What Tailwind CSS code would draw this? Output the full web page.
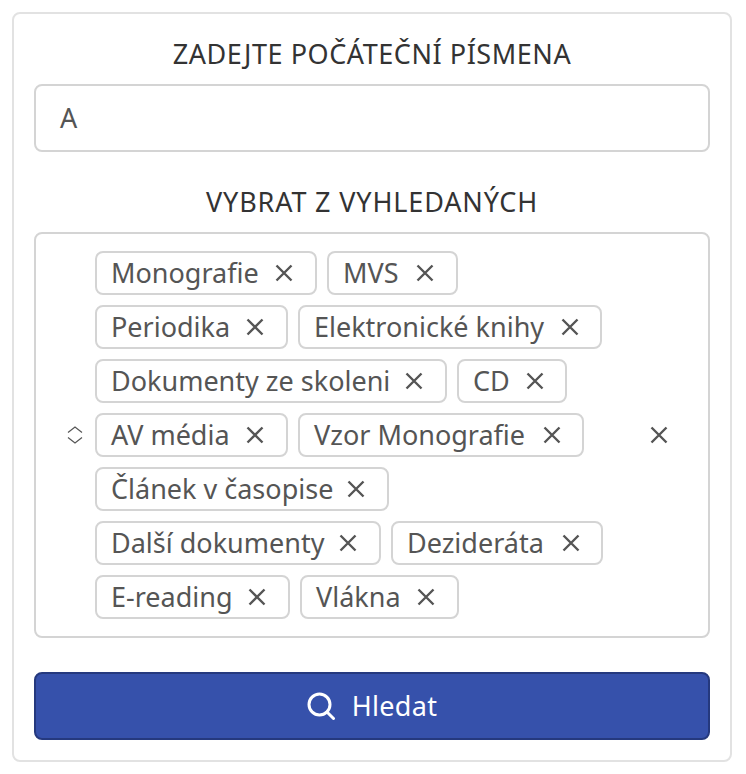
<!DOCTYPE html>
<html lang="cs">
<head>
    <meta charset="UTF-8">
    <title>Hledat</title>
    <script src="https://cdn.jsdelivr.net/npm/@tailwindcss/browser@4"></script>
</head>
<body class="bg-white font-['Noto_Sans',sans-serif]">
    <div class="pt-[12px] pl-[12px]">
        <div class="w-[720px] h-[750px] bg-white border-2 border-[#e2e2e2] rounded-[8px] px-[20px] pt-[18px]">
            <div class="h-[44px] mb-[8px] flex items-center justify-center text-[27px] text-[#333] tracking-[0.55px]">ZADEJTE POČÁTEČNÍ PÍSMENA</div>
            <div class="h-[68px] border-2 border-[#d4d4d4] rounded-[8px] flex items-center pl-[24px] text-[27px] text-[#555]">A</div>
            <div class="h-[80px] pt-[20px] flex items-center justify-center text-[27px] text-[#333] tracking-[0.85px]">VYBRAT Z VYHLEDANÝCH</div>
            <div class="h-[406px] border-2 border-[#d4d4d4] rounded-[8px] flex items-center pl-[31px]">
                <svg class="w-[16px] h-[18px] shrink-0" viewBox="0 0 16 18" fill="none" stroke="#555" stroke-width="1.200"><path d="M1 6.500 8 1l7 5.500M1 11.500 8 17l7-5.500"/></svg>
                <div class="w-[545px] ml-[12px] flex flex-wrap gap-[10px] text-[27px] text-[#555]">
                    <div class="w-[222px] h-[44px] border-2 border-[#d4d4d4] rounded-[8px] flex items-center justify-between pl-[14px] pr-[22px]">Monografie<svg class="w-[18px] h-[18px]" viewBox="0 0 18 18" stroke="#555" stroke-width="2.400"><path d="M1.500 1.500 16.500 16.500M16.500 1.500 1.500 16.500"/></svg></div>
                    <div class="w-[131px] h-[44px] border-2 border-[#d4d4d4] rounded-[8px] flex items-center justify-between pl-[14px] pr-[22px]">MVS<svg class="w-[18px] h-[18px]" viewBox="0 0 18 18" stroke="#555" stroke-width="2.400"><path d="M1.500 1.500 16.500 16.500M16.500 1.500 1.500 16.500"/></svg></div>
                    <div class="w-[193px] h-[44px] border-2 border-[#d4d4d4] rounded-[8px] flex items-center justify-between pl-[14px] pr-[22px]">Periodika<svg class="w-[18px] h-[18px]" viewBox="0 0 18 18" stroke="#555" stroke-width="2.400"><path d="M1.500 1.500 16.500 16.500M16.500 1.500 1.500 16.500"/></svg></div>
                    <div class="w-[304px] h-[44px] border-2 border-[#d4d4d4] rounded-[8px] flex items-center justify-between pl-[14px] pr-[21px]">Elektronické knihy<svg class="w-[18px] h-[18px]" viewBox="0 0 18 18" stroke="#555" stroke-width="2.400"><path d="M1.500 1.500 16.500 16.500M16.500 1.500 1.500 16.500"/></svg></div>
                    <div class="w-[352px] h-[44px] border-2 border-[#d4d4d4] rounded-[8px] flex items-center justify-between pl-[14px] pr-[22px]">Dokumenty ze skoleni<svg class="w-[18px] h-[18px]" viewBox="0 0 18 18" stroke="#555" stroke-width="2.400"><path d="M1.500 1.500 16.500 16.500M16.500 1.500 1.500 16.500"/></svg></div>
                    <div class="w-[110px] h-[44px] border-2 border-[#d4d4d4] rounded-[8px] flex items-center justify-between pl-[14px] pr-[21px]">CD<svg class="w-[18px] h-[18px]" viewBox="0 0 18 18" stroke="#555" stroke-width="2.400"><path d="M1.500 1.500 16.500 16.500M16.500 1.500 1.500 16.500"/></svg></div>
                    <div class="w-[193px] h-[44px] border-2 border-[#d4d4d4] rounded-[8px] flex items-center justify-between pl-[14px] pr-[22px]">AV média<svg class="w-[18px] h-[18px]" viewBox="0 0 18 18" stroke="#555" stroke-width="2.400"><path d="M1.500 1.500 16.500 16.500M16.500 1.500 1.500 16.500"/></svg></div>
                    <div class="w-[286px] h-[44px] border-2 border-[#d4d4d4] rounded-[8px] flex items-center justify-between pl-[14px] pr-[21px]">Vzor Monografie<svg class="w-[18px] h-[18px]" viewBox="0 0 18 18" stroke="#555" stroke-width="2.400"><path d="M1.500 1.500 16.500 16.500M16.500 1.500 1.500 16.500"/></svg></div>
                    <div class="w-[294px] h-[44px] border-2 border-[#d4d4d4] rounded-[8px] flex items-center justify-between pl-[14px] pr-[22px]">Článek v časopise<svg class="w-[18px] h-[18px]" viewBox="0 0 18 18" stroke="#555" stroke-width="2.400"><path d="M1.500 1.500 16.500 16.500M16.500 1.500 1.500 16.500"/></svg></div>
                    <div class="w-[286px] h-[44px] border-2 border-[#d4d4d4] rounded-[8px] flex items-center justify-between pl-[14px] pr-[22px]">Další dokumenty<svg class="w-[18px] h-[18px]" viewBox="0 0 18 18" stroke="#555" stroke-width="2.400"><path d="M1.500 1.500 16.500 16.500M16.500 1.500 1.500 16.500"/></svg></div>
                    <div class="w-[212px] h-[44px] border-2 border-[#d4d4d4] rounded-[8px] flex items-center justify-between pl-[14px] pr-[21px]">Dezideráta<svg class="w-[18px] h-[18px]" viewBox="0 0 18 18" stroke="#555" stroke-width="2.400"><path d="M1.500 1.500 16.500 16.500M16.500 1.500 1.500 16.500"/></svg></div>
                    <div class="w-[195px] h-[44px] border-2 border-[#d4d4d4] rounded-[8px] flex items-center justify-between pl-[14px] pr-[22px]">E-reading<svg class="w-[18px] h-[18px]" viewBox="0 0 18 18" stroke="#555" stroke-width="2.400"><path d="M1.500 1.500 16.500 16.500M16.500 1.500 1.500 16.500"/></svg></div>
                    <div class="w-[159px] h-[44px] border-2 border-[#d4d4d4] rounded-[8px] flex items-center justify-between pl-[14px] pr-[22px]">Vlákna<svg class="w-[18px] h-[18px]" viewBox="0 0 18 18" stroke="#555" stroke-width="2.400"><path d="M1.500 1.500 16.500 16.500M16.500 1.500 1.500 16.500"/></svg></div>
                </div>
                <svg class="w-[18px] h-[18px] ml-[10px] shrink-0" viewBox="0 0 18 18" stroke="#555" stroke-width="2.400"><path d="M1.500 1.500 16.500 16.500M16.500 1.500 1.500 16.500"/></svg>
            </div>
            <button class="mt-[34px] w-full h-[68px] bg-[#3651ab] border-2 border-[#25397e] rounded-[8px] flex items-center justify-center gap-[17px] text-[27px] text-white tracking-[0.3px]">
                <svg class="w-[28px] h-[28px]" viewBox="0 0 28 28" fill="none" stroke="#fff" stroke-width="3" stroke-linecap="round"><circle cx="12.500" cy="12.500" r="10.500"/><path d="M20 20l6.500 6.500"/></svg>
                Hledat
            </button>
        </div>
    </div>
</body>
</html>
